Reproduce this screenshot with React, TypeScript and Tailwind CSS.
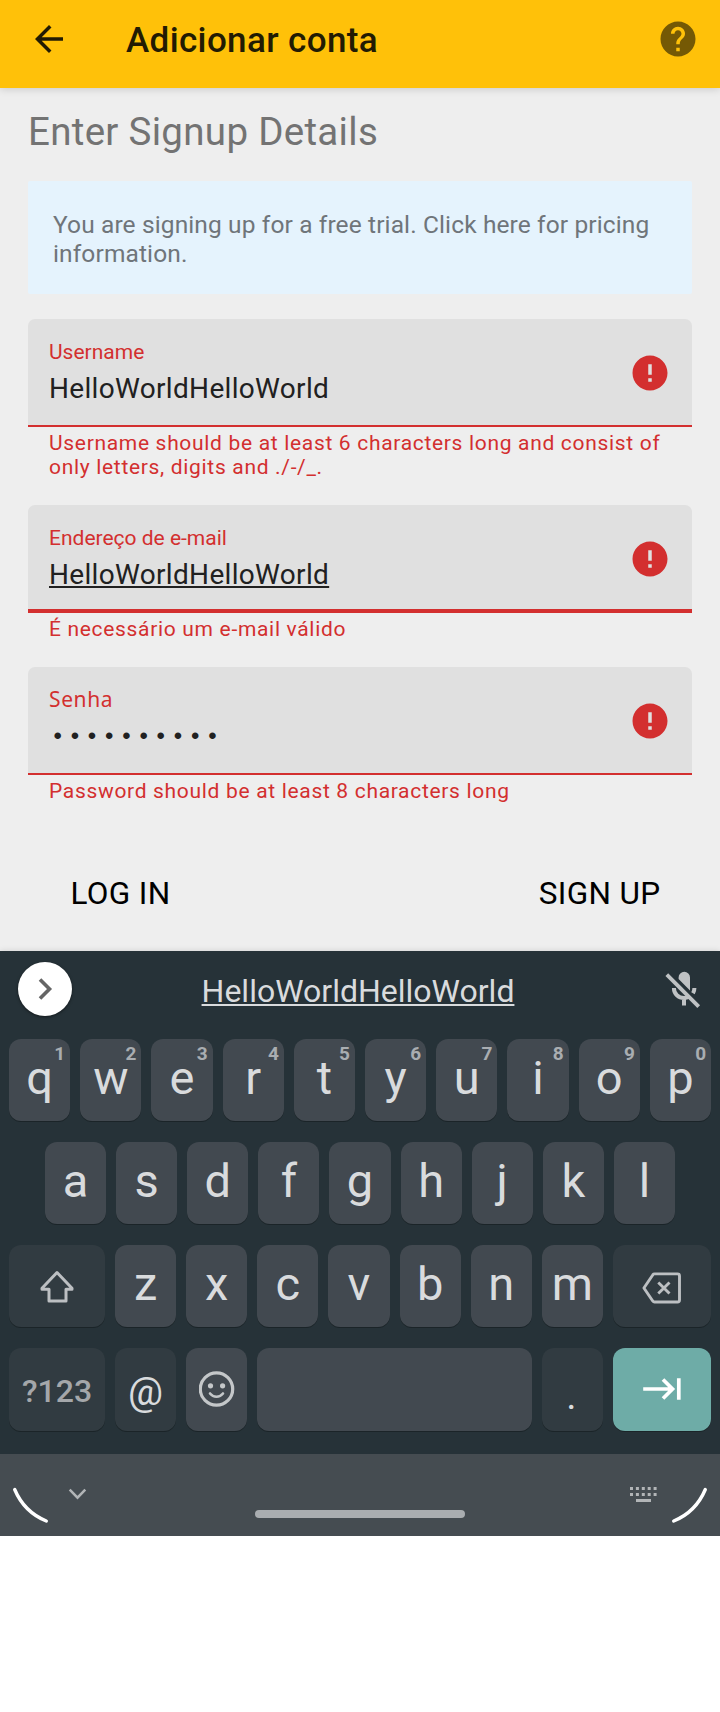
import type { ReactNode } from "react";

function ErrorIcon() {
  return (
    <svg viewBox="0 0 24 24" className="mt-[33px] mr-[21px] size-[42px] shrink-0" fill="#d32f2f">
      <path d="M12 2C6.48 2 2 6.48 2 12s4.48 10 10 10 10-4.48 10-10S17.52 2 12 2zm1 15h-2v-2h2v2zm0-4h-2V7h2v6z" />
    </svg>
  );
}

type FieldProps = {
  label: string;
  labelClass?: string;
  lineClass?: string;
  helper: string;
  children: ReactNode;
};

function Field({ label, labelClass = "leading-[24px]", lineClass = "border-b-2", helper, children }: FieldProps) {
  return (
    <div className="text-[21px] text-[#d32f2f]">
      <div className={`flex h-[108px] items-start justify-between rounded-t-[7px] border-[#d32f2f] bg-[#e0e0e0] pl-[21px] ${lineClass}`}>
        <div className="pt-[21px]">
          <div className={`h-6 ${labelClass}`}>{label}</div>
          <div className="mt-[9px] h-8 text-[28px] leading-[32px] tracking-[0.32px] text-[#212121]">{children}</div>
        </div>
        <ErrorIcon />
      </div>
      <p className="mt-1 pr-6 pl-[21px] leading-[24px] tracking-[0.68px]">{helper}</p>
    </div>
  );
}

function Key({ label, hint, className = "h-[82px] flex-1 bg-[#424950] text-[47px]" }: { label: ReactNode; hint?: string; className?: string }) {
  return (
    <div className={`relative flex items-center justify-center rounded-[12px] shadow-[0_1px_0_#1b2428] ${className}`}>
      <span className="pb-1 leading-[56px]">{label}</span>
      {hint && <span className="absolute top-[5px] right-[5px] text-[19px] leading-[20px] font-bold text-[#a9adb1]">{hint}</span>}
    </div>
  );
}

const DARK = "bg-[#313b41]";

export default function App() {
  return (
    <div className="min-h-[1712px] w-[720px] bg-white font-[Roboto,sans-serif]">
      <header className="relative flex h-[88px] items-center bg-[#ffc109] pr-[21px] pb-[10px] pl-7 shadow-[0_1px_8px_rgba(0,0,0,0.16)]">
        <svg viewBox="0 0 24 24" className="size-[42px]" fill="#221b03">
          <path d="M20 11H7.83l5.59-5.59L12 4l-8 8 8 8 1.41-1.41L7.83 13H20v-2z" />
        </svg>
        <h1 className="mt-1 ml-14 flex-1 text-[35px] leading-[40px] font-medium tracking-[0.37px] text-[#221b03]">Adicionar conta</h1>
        <svg viewBox="0 0 24 24" className="size-[42px]" fill="#755905">
          <path d="M12 2C6.48 2 2 6.48 2 12s4.48 10 10 10 10-4.48 10-10S17.52 2 12 2zm1 17h-2v-2h2v2zm2.07-7.75l-.9.92C13.45 12.9 13 13.5 13 15h-2v-.5c0-1.1.45-2.1 1.17-2.83l1.24-1.26c.37-.36.59-.86.59-1.41 0-1.1-.9-2-2-2s-2 .9-2 2H8c0-2.21 1.79-4 4-4s4 1.79 4 4c0 .88-.36 1.68-.93 2.25z" />
        </svg>
      </header>

      <main className="h-[863px] bg-[#eeeeee] px-7 pt-5">
        <h2 className="text-[38.5px] leading-[48px] tracking-[0.3px] text-[#737373]">Enter Signup Details</h2>
        <div className="mt-[25px] h-[113px] rounded-[2px] bg-[#e5f3fd] pt-[29px] pl-[25px] text-[24.5px] leading-[29px] tracking-[0.12px] text-[#6f757a]">
          You are signing up for a free trial. Click here for pricing
          <br />
          information.
        </div>
        <div className="mt-[25px] flex flex-col gap-[26px]">
          <Field label="Username" helper="Username should be at least 6 characters long and consist of only letters, digits and ./-/_.">
            HelloWorldHelloWorld
          </Field>
          <Field label="Endereço de e-mail" lineClass="border-b-4" helper="É necessário um e-mail válido">
            <span className="underline decoration-[1.5px] underline-offset-[1.5px] [text-decoration-skip-ink:none]">HelloWorldHelloWorld</span>
          </Field>
          <Field
            label="Senha"
            labelClass="font-['Noto_Sans',sans-serif] leading-[22px] tracking-[0.6px]"
            helper="Password should be at least 8 characters long"
          >
            <span className="block pl-[1.5px] font-['Liberation_Mono',monospace] text-[24px] leading-[33px] tracking-[2.78px]">••••••••••</span>
          </Field>
        </div>
        <div className="mt-[71px] flex justify-between pr-[31.5px] pl-[42.5px] text-[31.5px] leading-[40px] tracking-[0.35px] text-black">
          <span>LOG IN</span>
          <span>SIGN UP</span>
        </div>
      </main>

      <section className="relative h-[503px] bg-[#263238] text-[#d9dbdd] shadow-[0_0_6px_rgba(0,0,0,0.13)]">
        <div className="flex h-[88px] items-center pr-[5px] pb-3 pl-[18px]">
          <div className="flex size-[54px] items-center justify-center rounded-full bg-white shadow-[0_1px_3px_rgba(0,0,0,0.5)]">
            <svg viewBox="0 0 54 54" className="size-[54px]" fill="none" stroke="#656565" strokeWidth="3.6">
              <path d="M22 17.5 31.5 27 22 36.5" />
            </svg>
          </div>
          <div className="mt-1 flex-1 pr-[11px] text-center text-[32px] leading-[40px]">
            <span className="underline decoration-[1.7px] underline-offset-[2px] [text-decoration-skip-ink:none]">HelloWorldHelloWorld</span>
          </div>
          <svg viewBox="0 0 60 60" className="mt-[6px] size-[60px] shrink-0" fill="none" stroke="#bfc2c4" strokeWidth="4">
            <path d="M23.6 15.5a5.7 5.7 0 0 1 11.4 0V28.4L23.6 17z" fill="#bfc2c4" stroke="none" />
            <path d="M18.9 26c0 6 4.6 10 10.1 10 2 0 3.6-.5 5-1.4M39.4 26c0 2-.5 3.8-1.4 5.3M29 36v7.6" />
            <path d="M11.8 12.6 43.7 44.7" strokeWidth="3.8" />
          </svg>
        </div>

        <div className="flex flex-col gap-[21px]">
          <div className="flex gap-[10px] px-[9px]">
            {[..."qwertyuiop"].map((k, i) => (
              <Key key={k} label={k} hint={String((i + 1) % 10)} />
            ))}
          </div>
          <div className="flex gap-[10px] px-[45px]">
            {[..."asdfghjkl"].map((k) => (
              <Key key={k} label={k} />
            ))}
          </div>
          <div className="flex gap-[10px] px-[9px]">
            <Key
              className={`h-[82px] w-24 ${DARK}`}
              label={
                <svg viewBox="0 0 36 36" className="mt-[3px] size-9" fill="none" stroke="#bcbfc2" strokeWidth="3" strokeLinejoin="round">
                  <path d="M18 4.5 33 20.3V21.2H27V33H10V21.2H3V20.3z" />
                </svg>
              }
            />
            {[..."zxcvbnm"].map((k) => (
              <Key key={k} label={k} />
            ))}
            <Key
              className={`h-[82px] w-[98px] ${DARK}`}
              label={
                <svg viewBox="0 0 42 34" className="mt-[7px] h-[34px] w-[42px]" fill="none" stroke="#bcbfc2" strokeWidth="2.9" strokeLinejoin="round">
                  <path d="M2.9 17 11.9 3.7Q12.5 2.9 13.5 2.9H36.5Q38.5 2.9 38.5 4.9V29Q38.5 31 36.5 31H13.5Q12.5 31 11.9 30.2zM17.3 11.5 28.5 22.5M28.5 11.5 17.3 22.5" />
                </svg>
              }
            />
          </div>
          <div className="flex gap-[10px] px-[9px]">
            <Key className={`h-[83px] w-24 pt-1.5 text-[32px] font-medium text-[#a4a7aa] ${DARK}`} label="?123" />
            <Key className={`h-[83px] w-[61px] pt-[8px] text-[39px] ${DARK}`} label="@" />
            <Key
              className="h-[83px] w-[61px] bg-[#424950]"
              label={
                <svg viewBox="0 0 36 36" className="mt-[3px] size-9" fill="none" stroke="#c4c7c9" strokeWidth="3.2">
                  <circle cx="17.5" cy="18" r="16.2" />
                  <circle cx="11.5" cy="14.8" r="2.6" fill="#c4c7c9" stroke="none" />
                  <circle cx="23.6" cy="14.8" r="2.6" fill="#c4c7c9" stroke="none" />
                  <path d="M11 22.5Q13.5 25.7 17.5 25.7T24 22.5" strokeLinecap="round" strokeWidth="2.6" />
                </svg>
              }
            />
            <Key className="h-[83px] flex-1 bg-[#424950]" label="" />
            <Key className={`h-[83px] w-[61px] pt-[17px] pr-[2px] text-[39px] ${DARK}`} label="." />
            <Key
              className="h-[83px] w-[98px] bg-[#6eaca7]"
              label={
                <svg viewBox="0 0 42 24" className="mt-[3px] h-6 w-[42px]" fill="none" stroke="#ffffff" strokeWidth="3.7">
                  <path d="M2.2 12H32.5M22 2.5 31.5 12 22 21.5M37.8 1.3V22.7" />
                </svg>
              }
            />
          </div>
        </div>
      </section>

      <footer className="relative flex h-[82px] items-start bg-[#454c51] pt-[31px] pl-[10px]">
        <svg viewBox="0 0 40 40" className="size-10" fill="none" stroke="#ffffff" strokeWidth="3.4" strokeLinecap="round">
          <path d="M4.7 4.5Q14.2 27 36.3 36" />
        </svg>
        <svg viewBox="0 0 20 14" className="mt-0.5 ml-[18px] h-3.5 w-5" fill="none" stroke="#b2b5b7" strokeWidth="2.5">
          <path d="M1.7 2.7 9.5 10.7 17.3 2.7" />
        </svg>
        <div className="mt-[25px] ml-[167px] h-2 w-[210px] rounded-full bg-[#a9adb0]" />
        <svg viewBox="0 0 28 16" className="mt-0.5 ml-[165px] h-4 w-7" fill="#b2b5b7">
          {[0, 1, 2, 3, 4].map((c) => (
            <path key={c} d="M0 0h3v3H0zM0 6h3v3H0z" transform={`translate(${c * 5.9} 0)`} />
          ))}
          <path d="M6 12h15v3H6z" />
        </svg>
        <svg viewBox="0 0 40 40" className="ml-3 size-10" fill="none" stroke="#ffffff" strokeWidth="3.4" strokeLinecap="round">
          <path d="M35.3 4.5Q25.8 27 3.7 36" />
        </svg>
      </footer>
    </div>
  );
}
